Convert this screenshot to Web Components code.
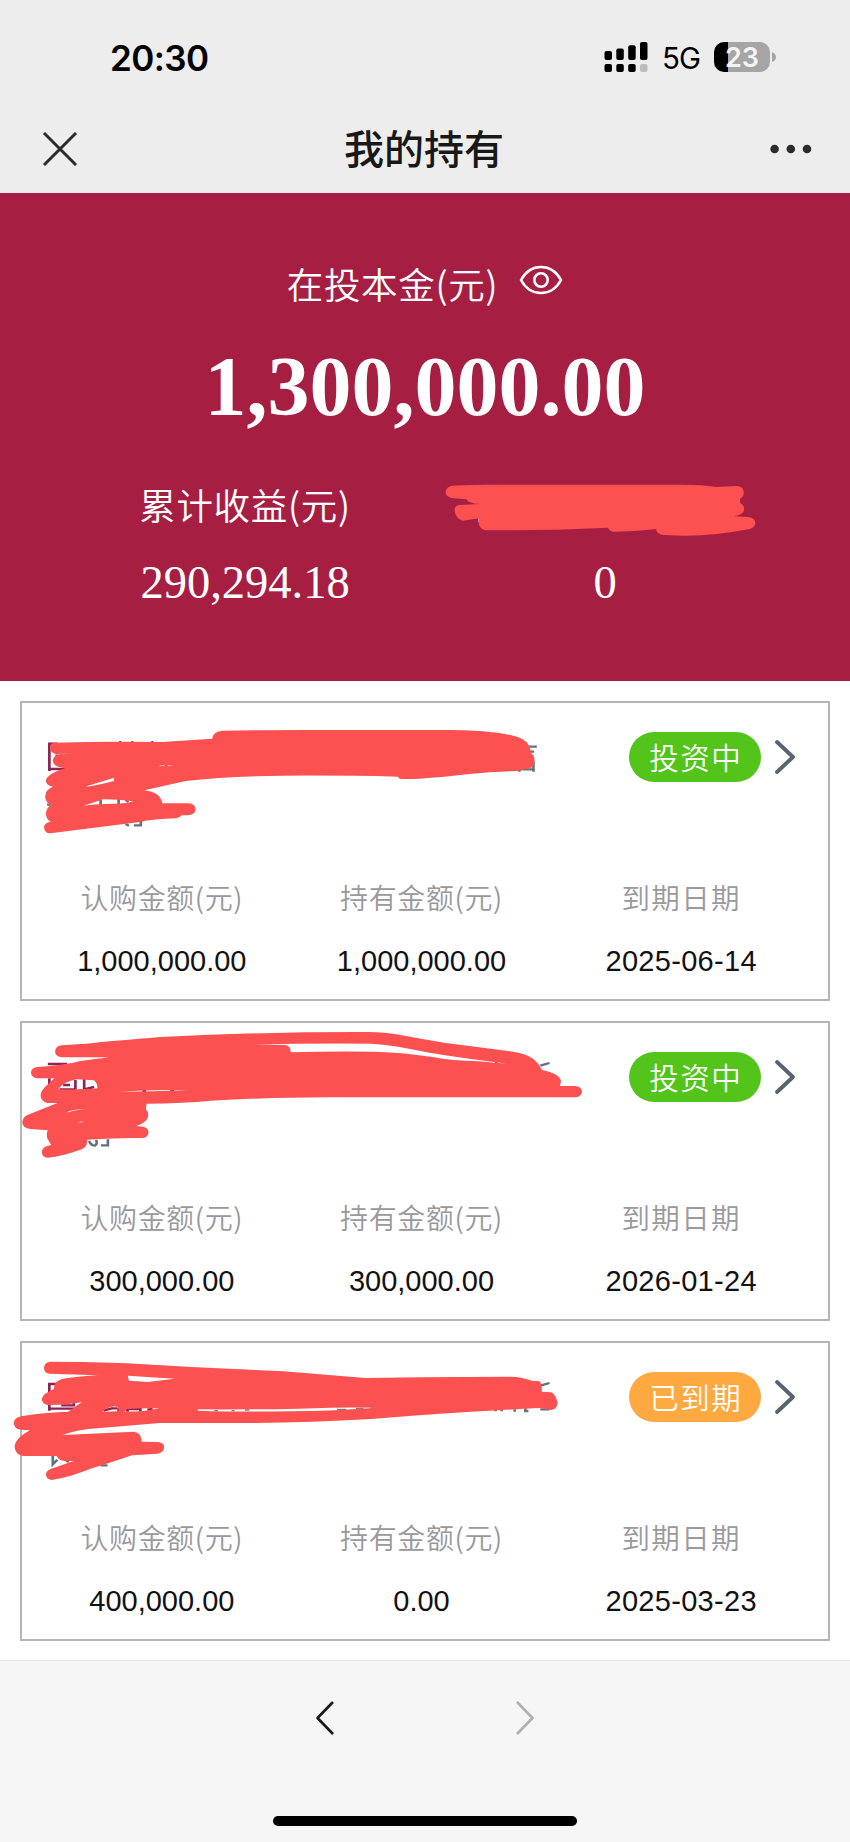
<!DOCTYPE html>
<html lang="zh-CN">
<head>
<meta charset="utf-8">
<meta name="viewport" content="width=device-width, initial-scale=1">
<title>我的持有</title>
<style>
  body {
    margin: 0;
    background: #fff;
    font-family: "Liberation Sans", "Noto Sans CJK SC", sans-serif;
  }
</style>
</head>
<body>
<holdings-page></holdings-page>

<script>
const STATUS_BAR_NAME = "status-bar"
const NAV_HEADER_NAME = "nav-header"
const SUMMARY_PANEL_NAME = "summary-panel"
const SCRIBBLE_MARK_NAME = "scribble-mark"
const HOLDING_CARD_NAME = "holding-card"
const BROWSER_FOOTER_NAME = "browser-footer"
const HOLDINGS_PAGE_NAME = "holdings-page"

/*Status bar */
class StatusBar extends HTMLElement {
  constructor() {
    super();
    this.attachShadow({ mode: 'open' });
  }

  static get style() {
    return /*css*/ `
    :host {
      display: flex;
      justify-content: space-between;
      box-sizing: border-box;
      height: 105px;
      padding: 12px 74px 0 110px;
      background: #ededed;
      color: #000;
      font-family: Inter, "Liberation Sans", sans-serif;
    }
    .time {
      font-size: 35px;
      font-weight: 600;
      line-height: 92px;
      letter-spacing: -0.6px;
    }
    .right {
      display: flex;
      align-items: center;
      height: 90px;
    }
    .network {
      font-size: 29.5px;
      line-height: 36px;
      letter-spacing: -1px;
      margin: 2px 14px 0 14px;
    }
    svg { display: block; }
    .battery {
      width: 56px;
      height: 30px;
      border-radius: 10px;
      background: linear-gradient(90deg, #000 14px, #a5a5a5 14px);
      color: #f4f4f4;
      font-size: 27px;
      font-weight: 600;
      line-height: 31px;
      text-align: center;
    }
    .nub { margin-left: 2px; }
    `;
  }

  connectedCallback() {
    this.render();
  }

  render(){
    this.shadowRoot.innerHTML = /*html*/ `
    <style>
      ${StatusBar.style}
    </style>
    <div class="time">20:30</div>
    <div class="right">
      <svg width="44" height="30" viewBox="0 0 44 30">
        <rect x="0.5" y="9" width="7.5" height="9" rx="2"/>
        <rect x="12.3" y="6.5" width="7.5" height="11.5" rx="2"/>
        <rect x="24.2" y="3.2" width="7.5" height="14.8" rx="2"/>
        <rect x="36" y="0" width="7.5" height="18" rx="2"/>
        <rect x="0.5" y="22" width="7.5" height="8" rx="2"/>
        <rect x="12.3" y="22" width="7.5" height="8" rx="2"/>
        <rect x="24.2" y="22" width="7.5" height="8" rx="2"/>
        <rect x="36" y="22" width="7.5" height="8" rx="2" fill="#bdbdbd"/>
      </svg>
      <span class="network">5G</span>
      <span class="battery">23</span>
      <svg class="nub" width="4" height="10" viewBox="0 0 4 10"><path d="M0 0Q4 1.5 4 5T0 10Z" fill="#a5a5a5"/></svg>
    </div>
    `;
  }
}
window.customElements.define(STATUS_BAR_NAME, StatusBar);

/*Title bar */
class NavHeader extends HTMLElement {
  constructor() {
    super();
    this.attachShadow({ mode: 'open' });
  }

  static get style() {
    return /*css*/ `
    :host {
      display: grid;
      grid-template-columns: 1fr auto 1fr;
      align-items: center;
      box-sizing: border-box;
      height: 88px;
      padding: 0 38px 0 42px;
      background: #ededed;
      color: #181818;
    }
    h1 {
      margin: 2px 6px 0 0;
      font-size: 40px;
      font-weight: 500;
      line-height: 86px;
    }
    svg { display: block; }
    .more { justify-self: end; }
    `;
  }

  connectedCallback() {
    this.render();
  }

  render(){
    this.shadowRoot.innerHTML = /*html*/ `
    <style>
      ${NavHeader.style}
    </style>
    <svg width="36" height="36" viewBox="0 0 36 36" fill="none" stroke="#2b2b2b" stroke-width="3"><path d="M2 2l32 32M34 2L2 34"/></svg>
    <h1><slot></slot></h1>
    <svg class="more" width="42" height="10" viewBox="0 0 42 10" fill="#2b2b2b"><circle cx="4.6" cy="5" r="4.3"/><circle cx="20.8" cy="5" r="4.3"/><circle cx="37" cy="5" r="4.3"/></svg>
    `;
  }
}
window.customElements.define(NAV_HEADER_NAME, NavHeader);

/*Marker strokes over the private fields */
const SCRIBBLES = {
  label: {
    height: 480,
    marks: `<path d="M850 174v13" stroke="#fff" stroke-width="4"/>`,
    ink: `<path d="M790 77Q840 74 870 74H1300Q1350 74 1380 81L1428 78Q1442 80 1442 98Q1442 110 1434 115V130Q1443 135 1443 148Q1442 164 1420 169L1452 171Q1468 174 1468 190Q1468 204 1452 208Q1380 227 1310 227L1262 225Q1246 222 1246 207Q1190 215 1150 215Q1140 212 1138 203Q1000 212 865 211Q850 208 849 192V175L812 182Q800 178 796 160Q790 138 806 135L850 132Q825 131 821 118L788 114Q774 110 774 96Q775 80 790 77Z"/>`
  },
  first: {
    height: 540,
    marks: `
      <path d="M129 303V221H150M129 297H175M145 257h20" stroke="#8c2350" stroke-width="7"/>
      <path d="M314 213v6M346 213v6M398 213v6M430 288h8" stroke="#8c2350" stroke-width="5"/>
      <path d="M1374 216v14M1380 230h23M1382 245h14M1357 294v11M1394 275v30M1360 298h34" stroke="#65727b" stroke-width="7"/>
      <path d="M123 404h12M263 390v16M310 386v18M328 390l8 5M328 462l9 5M350 466H368V452" stroke="#65727b" stroke-width="7"/>`,
    ink: `<path fill-rule="evenodd" d="M140 218Q280 213 425 216L555 206Q556 185 580 182Q700 179 900 180H1180Q1320 182 1365 207Q1385 221 1388 250Q1397 255 1397 274Q1395 293 1380 296L1350 303Q1290 304 1220 313Q1120 326 1080 327H1048Q1041 325 1040 320Q900 316 740 317Q590 319 485 333L377 361Q420 367 424 400H492Q511 401 511 418Q510 434 492 436H474Q470 444 460 445Q400 447 365 456L132 490Q115 489 115 470Q117 458 132 455Q120 448 120 430Q122 411 135 404Q118 397 118 380Q119 358 138 350Q119 346 120 330Q124 312 170 295L155 291Q138 286 138 271Q139 256 160 253L182 251L145 252Q131 248 131 235Q131 222 140 218ZM228 348L298 323V333Q260 345 228 350ZM218 407L270 388Q310 388 348 394Q330 401 300 401Q250 401 218 407ZM410 289Q435 284 453 287Q430 288 410 289Z"/>`
  },
  second: {
    height: 480,
    marks: `
      <path d="M125 162h50M129 205v20M155 238h42V210M165 225h18M220 205v33l26-7M372 243h10M445 242h10" stroke="#8c2350" stroke-width="7"/>
      <path d="M1412 167L1436 159M1297 155v6M233 393q5 14 15 14q8-6 3-17M282 388v18h-18" stroke="#65727b" stroke-width="7"/>`,
    ink: `<path fill-rule="evenodd" d="M160 106L225 101Q300 92 420 81Q700 65 960 66Q1010 66 1060 78L1160 98L1340 125Q1400 134 1416 180Q1466 192 1466 215L1463 228H1502Q1521 230 1521 245Q1519 261 1502 262H860Q680 263 550 272Q480 280 383 281L381 298Q388 304 387 320Q382 338 356 348L374 350Q388 353 388 368Q387 383 370 384Q300 383 228 389Q229 410 214 418Q160 440 125 443Q109 441 109 425Q111 409 134 405L124 386Q120 371 125 361L80 357Q59 355 58 336Q60 318 78 312L150 279H124Q106 275 106 256Q107 240 128 220L142 205H96Q81 202 81 187Q83 172 98 171Q170 165 210 153L285 142H160Q144 139 144 124Q145 109 160 106ZM665 104L745 105Q760 108 760 127Q860 123 980 125Q1060 128 1130 141Q1180 152 1250 154Q1300 159 1326 161Q1200 144 1115 127Q1030 105 970 101Q800 99 665 104ZM152 238Q168 214 200 208L246 211Q257 225 254 235Q218 239 152 238ZM310 245Q400 238 492 241Q400 245 310 245ZM172 308Q190 298 222 298Q194 300 172 308ZM202 339Q209 334 221 334Q214 338 202 339Z"/>`
  },
  third: {
    height: 480,
    marks: `
      <path d="M129 242V162H148M129 236H195M160 226H193V215M270 242l22-7h14M310 233v13M333 245v-8h34v8M385 239l14-2" stroke="#8c2350" stroke-width="7"/>
      <path d="M560 242h10M605 242h8M640 240h12M880 238h25M930 235h20M968 234h12" stroke="#75808a" stroke-width="4"/>
      <path d="M1412 167L1436 159M1295 240v4M1311 240v4M1345 238v7M1373 235v8h8M1412 238h24M138 378v25l12-14M172 390l8 6M263 406h18" stroke="#65727b" stroke-width="7"/>`,
    ink: `<path fill-rule="evenodd" d="M130 95Q250 95 330 100L500 111L740 124L955 144L1100 142L1335 140Q1360 140 1390 152L1410 154Q1416 158 1416 185L1440 187Q1450 191 1457 216Q1458 236 1440 240L1410 234Q1180 247 970 267Q780 280 600 279H418L230 297Q185 304 165 315L350 305Q369 307 370 335L414 336Q429 339 429 352Q428 368 412 371L345 376Q300 394 240 415Q180 443 135 450Q120 448 120 432Q122 419 140 414L192 393H168Q154 391 148 378H60Q39 374 38 348Q41 324 78 301L55 299Q36 296 36 278Q38 262 58 258Q100 249 178 245L214 216Q180 225 125 225Q110 222 109 206Q112 191 141 177Q140 155 160 148Q190 140 255 136Q170 132 128 131Q115 128 115 113Q116 98 130 95ZM334 137L457 146L385 156L337 152ZM268 245Q280 232 300 229Q313 233 309 244ZM327 245L331 237Q370 234 417 235Q395 240 370 244ZM517 238Q650 239 780 236Q900 231 985 233Q880 242 760 244Q620 246 517 242Z"/>`
  }
}

class ScribbleMark extends HTMLElement {
  constructor() {
    super();
    this.attachShadow({ mode: 'open' });
  }

  static get style() {
    return /*css*/ `
    :host {
      display: block;
      pointer-events: none;
    }
    svg {
      display: block;
      width: 100%;
      height: 100%;
    }
    `;
  }

  connectedCallback() {
    this.render();
  }

  render(){
    const { height, marks, ink } = SCRIBBLES[this.getAttribute("shape")];
    this.shadowRoot.innerHTML = /*html*/ `
    <style>
      ${ScribbleMark.style}
    </style>
    <svg viewBox="0 0 1568 ${height}" preserveAspectRatio="none">
      <g fill="none">${marks}</g>
      <g fill="#fd5151">${ink}</g>
    </svg>
    `;
  }
}
window.customElements.define(SCRIBBLE_MARK_NAME, ScribbleMark);

/*Summary panel */
class SummaryPanel extends HTMLElement {
  constructor() {
    super();
    this.attachShadow({ mode: 'open' });
  }

  static get style() {
    return /*css*/ `
    :host {
      display: flex;
      flex-direction: column;
      box-sizing: border-box;
      height: 488px;
      padding: 64px 65px 0;
      position: relative;
      background: #a61f43;
      color: #fff;
    }
    .label {
      font-family: "Noto Sans CJK SC", sans-serif;
      font-size: 36.5px;
      font-weight: 350;
      line-height: 54px;
      letter-spacing: 0.7px;
    }
    .principal {
      display: flex;
      justify-content: center;
      gap: 21px;
    }
    .principal svg { margin-top: 7px; }
    .amount {
      margin-top: 28px;
      font-family: "Liberation Serif", serif;
      font-size: 84px;
      font-weight: 700;
      line-height: 96px;
      text-align: center;
    }
    .columns {
      display: grid;
      grid-template-columns: 1fr 1fr;
      margin-top: 43px;
      text-align: center;
    }
    .columns .label { height: 54px; }
    .value {
      margin-top: 24px;
      font-family: "Liberation Serif", serif;
      font-size: 46.5px;
      line-height: 54px;
    }
    scribble-mark {
      position: absolute;
      left: 100px;
      top: 267px;
      width: 700px;
      height: 160px;
    }
    `;
  }

  connectedCallback() {
    this.render();
  }

  render(){
    this.shadowRoot.innerHTML = /*html*/ `
    <style>
      ${SummaryPanel.style}
    </style>
    <div class="principal">
      <span class="label">在投本金(元)</span>
      <svg width="44" height="32" viewBox="0 0 44 32" fill="none" stroke="#fff" stroke-width="2.6"><path d="M2 16Q9 3 22 3T42 16Q35 29 22 29T2 16Z" stroke-linejoin="round"/><circle cx="22" cy="16" r="6.7"/></svg>
    </div>
    <div class="amount">1,300,000.00</div>
    <div class="columns">
      <div>
        <div class="label">累计收益(元)</div>
        <div class="value">290,294.18</div>
      </div>
      <div>
        <div class="label"></div>
        <div class="value">0</div>
      </div>
    </div>
    <scribble-mark shape="label"></scribble-mark>
    `;
  }
}
window.customElements.define(SUMMARY_PANEL_NAME, SummaryPanel);

/*Holding card */
class HoldingCard extends HTMLElement {
  constructor() {
    super();
    this.attachShadow({ mode: 'open' });
  }

  static get style() {
    return /*css*/ `
    :host {
      --status-color: #53c41a;
      display: block;
      box-sizing: border-box;
      height: 300px;
      position: relative;
      border: 2px solid #b5b5b5;
      background: #fff;
    }
    :host([ended]) { --status-color: #ffa940; }
    .top {
      display: flex;
      justify-content: flex-end;
      align-items: center;
      gap: 13px;
      padding: 29px 32px 0 0;
    }
    .status {
      width: 132px;
      height: 50px;
      border-radius: 25px;
      background: var(--status-color);
      color: #fff;
      font-family: "Noto Sans CJK SC", sans-serif;
      font-size: 29.5px;
      font-weight: 350;
      line-height: 48px;
      letter-spacing: 1.6px;
      text-indent: 1.6px;
      text-align: center;
    }
    .fields {
      display: grid;
      grid-template-columns: repeat(3, 1fr);
      margin: 91px 17px 0 10px;
      text-align: center;
    }
    .label {
      font-family: "Noto Sans CJK SC", sans-serif;
      color: #999;
      font-size: 28px;
      font-weight: 350;
      line-height: 48px;
      letter-spacing: 0.6px;
    }
    .date .label {
      font-size: 28.5px;
      letter-spacing: 1.3px;
    }
    .value {
      margin-top: 16px;
      color: #111;
      font-size: 29px;
      line-height: 49px;
    }
    .date .value { letter-spacing: 0.3px; }
    ::slotted(scribble-mark) {
      position: absolute;
      left: -22px;
      top: -13px;
      width: 600px;
      height: 160px;
    }
    ::slotted(scribble-mark[shape="first"]) {
      top: -33px;
      height: 180px;
    }
    `;
  }

  connectedCallback() {
    this.render();
  }

  render(){
    this.shadowRoot.innerHTML = /*html*/ `
    <style>
      ${HoldingCard.style}
    </style>
    <div class="top">
      <span class="status">${this.getAttribute("status")}</span>
      <svg width="22" height="38" viewBox="0 0 22 38" fill="none" stroke="#56656f" stroke-width="3.8" stroke-linecap="round" stroke-linejoin="round"><path d="M3 4l16 15L3 34"/></svg>
    </div>
    <div class="fields">
      <div><div class="label">认购金额(元)</div><div class="value">${this.getAttribute("bought")}</div></div>
      <div><div class="label">持有金额(元)</div><div class="value">${this.getAttribute("held")}</div></div>
      <div class="date"><div class="label">到期日期</div><div class="value">${this.getAttribute("due")}</div></div>
    </div>
    <slot></slot>
    `;
  }
}
window.customElements.define(HOLDING_CARD_NAME, HoldingCard);

/*Browser footer */
class BrowserFooter extends HTMLElement {
  constructor() {
    super();
    this.attachShadow({ mode: 'open' });
  }

  static get style() {
    return /*css*/ `
    :host {
      display: flex;
      flex-direction: column;
      justify-content: space-between;
      align-items: center;
      box-sizing: border-box;
      height: 182px;
      padding: 39px 0 16px;
      border-top: 1px solid #e6e6e6;
      background: #f6f6f6;
    }
    .arrows {
      display: flex;
      gap: 180px;
    }
    .home {
      width: 304px;
      height: 10px;
      border-radius: 5px;
      background: #000;
    }
    `;
  }

  connectedCallback() {
    this.render();
  }

  render(){
    this.shadowRoot.innerHTML = /*html*/ `
    <style>
      ${BrowserFooter.style}
    </style>
    <div class="arrows">
      <svg width="20" height="36" viewBox="0 0 20 36" fill="none" stroke="#181818" stroke-width="2.6"><path d="M18 2L2.5 18 18 34" stroke-linejoin="round"/></svg>
      <svg width="20" height="36" viewBox="0 0 20 36" fill="none" stroke="#b0b0b0" stroke-width="2.6"><path d="M2 2l15.5 16L2 34" stroke-linejoin="round"/></svg>
    </div>
    <div class="home"></div>
    `;
  }
}
window.customElements.define(BROWSER_FOOTER_NAME, BrowserFooter);

/*Page */
class HoldingsPage extends HTMLElement {
  constructor() {
    super();
    this.attachShadow({ mode: 'open' });
  }

  static get style() {
    return /*css*/ `
    :host {
      display: flex;
      flex-direction: column;
      width: 850px;
      height: 1842px;
      overflow: hidden;
    }
    .list {
      display: flex;
      flex-direction: column;
      gap: 20px;
      flex: 1 1 0;
      padding: 20px 20px 0;
    }
    `;
  }

  connectedCallback() {
    this.render();
  }

  render(){
    this.shadowRoot.innerHTML = /*html*/ `
    <style>
      ${HoldingsPage.style}
    </style>
    <status-bar></status-bar>
    <nav-header>我的持有</nav-header>
    <summary-panel></summary-panel>
    <div class="list">
      <holding-card status="投资中" bought="1,000,000.00" held="1,000,000.00" due="2025-06-14">
        <scribble-mark shape="first"></scribble-mark>
      </holding-card>
      <holding-card status="投资中" bought="300,000.00" held="300,000.00" due="2026-01-24">
        <scribble-mark shape="second"></scribble-mark>
      </holding-card>
      <holding-card ended status="已到期" bought="400,000.00" held="0.00" due="2025-03-23">
        <scribble-mark shape="third"></scribble-mark>
      </holding-card>
    </div>
    <browser-footer></browser-footer>
    `;
  }
}
window.customElements.define(HOLDINGS_PAGE_NAME, HoldingsPage);
</script>
</body>
</html>
